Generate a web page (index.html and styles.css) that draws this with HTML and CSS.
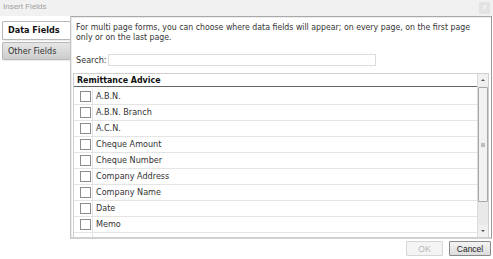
FILE: index.html
```html
<!DOCTYPE html>
<html>
<head>
<meta charset="utf-8">
<link rel="stylesheet" href="styles.css">
</head>
<body>
<div class="dialog">
  <div class="titlebar">
    <span class="title">Insert Fields</span>
    <span class="close">×</span>
  </div>
  <div class="main">
    <div class="tabs">
      <div class="tab active">Data Fields</div>
      <div class="tab">Other Fields</div>
    </div>
    <div class="panel">
      <p class="desc">For multi page forms, you can choose where data fields will appear; on every page, on the first page only or on the last page.</p>
      <div class="search">
        <span class="search-label">Search:</span>
        <span class="search-input"></span>
      </div>
      <div class="list">
        <div class="list-body">
          <div class="list-header">Remittance Advice</div>
          <div class="rows">
            <div class="row"><span class="cb-cell"><span class="cb"></span></span><span class="label">A.B.N.</span></div>
            <div class="row"><span class="cb-cell"><span class="cb"></span></span><span class="label">A.B.N. Branch</span></div>
            <div class="row"><span class="cb-cell"><span class="cb"></span></span><span class="label">A.C.N.</span></div>
            <div class="row"><span class="cb-cell"><span class="cb"></span></span><span class="label">Cheque Amount</span></div>
            <div class="row"><span class="cb-cell"><span class="cb"></span></span><span class="label">Cheque Number</span></div>
            <div class="row"><span class="cb-cell"><span class="cb"></span></span><span class="label">Company Address</span></div>
            <div class="row"><span class="cb-cell"><span class="cb"></span></span><span class="label">Company Name</span></div>
            <div class="row"><span class="cb-cell"><span class="cb"></span></span><span class="label">Date</span></div>
            <div class="row"><span class="cb-cell"><span class="cb"></span></span><span class="label">Memo</span></div>
            <div class="row row-empty"><span class="cb-cell"></span></div>
          </div>
        </div>
        <div class="scrollbar">
          <div class="arrow up"></div>
          <div class="track">
            <div class="thumb"><span class="grip"></span></div>
          </div>
          <div class="arrow down"></div>
        </div>
      </div>
    </div>
  </div>
  <div class="footer">
    <button class="btn disabled">OK</button>
    <button class="btn">Cancel</button>
  </div>
</div>
</body>
</html>
```

FILE: styles.css
```css
html, body {
  margin: 0;
  padding: 0;
  background: #ffffff;
}
body {
  font-family: "DejaVu Sans Condensed", "DejaVu Sans", sans-serif;
  font-stretch: condensed;
  font-size: 9px;
  color: #333;
  width: 493px;
  height: 259px;
  overflow: hidden;
}
.dialog {
  width: 493px;
  height: 259px;
  display: flex;
  flex-direction: column;
}
.titlebar {
  height: 16px;
  background: #f1f1f1;
  display: flex;
  justify-content: space-between;
  align-items: flex-start;
  padding: 0 3px;
  box-sizing: border-box;
}
.title {
  font-family: "Liberation Sans", sans-serif;
  font-size: 8px;
  color: #a0a0a0;
  line-height: 14px;
}
.close {
  margin-top: 2px;
  width: 11px;
  height: 12px;
  background: #e3e3e3;
  color: #f8f8f8;
  font-size: 8px;
  line-height: 12px;
  text-align: center;
}
.main {
  display: flex;
  height: 223px;
}
.tabs {
  width: 68px;
  padding: 5px 0 0 2px;
  display: flex;
  flex-direction: column;
  gap: 2px;
}
.tab {
  height: 16px;
  border: 1px solid #b8b8b8;
  border-right: none;
  border-radius: 2px 0 0 2px;
  padding-left: 5px;
  line-height: 16px;
  background: linear-gradient(#e6e6e6, #cdcdcd);
  color: #333;
  box-shadow: 0 1px 1px rgba(0,0,0,0.08);
}
.tab.active {
  background: #fff;
  font-weight: bold;
  color: #111;
  height: 17px;
  line-height: 17px;
}
.panel {
  flex: 1;
  margin-right: 1px;
  border-top: 1px solid #a9a9a9;
  border-left: 1px solid #c4c4c4;
  border-right: 1px solid #9a9a9a;
  border-bottom: 2px solid #d0d0d0;
  padding: 5px 0 0 1px;
  display: flex;
  flex-direction: column;
  box-shadow: inset 1px 1px 0 #ececec;
}
.desc {
  margin: 0 0 0 4px;
  max-width: 402px;
  font-size: 8.7px;
  line-height: 10px;
  color: #333;
}
.search {
  display: flex;
  align-items: center;
  margin: 12px 0 0 4px;
  height: 11px;
}
.search-label {
  width: 32px;
  flex-shrink: 0;
}
.search-input {
  flex-shrink: 0;
  width: 266px;
  height: 10px;
  border: 1px solid #dcdcdc;
}
.list {
  margin: 8px 2px 0 1px;
  flex: 1;
  border: 1px solid #cfcfcf;
  border-bottom: none;
  display: flex;
  overflow: hidden;
}
.list-body {
  flex: 1;
  overflow: hidden;
}
.list-header {
  height: 12px;
  padding-left: 3px;
  font-weight: bold;
  font-size: 8.8px;
  color: #111;
  line-height: 13px;
  border-bottom: 1px solid #666;
}
.rows {
  padding-top: 2px;
}
.row {
  height: 15px;
  border-bottom: 1px solid #e4e4e4;
  display: flex;
  align-items: stretch;
}
.row-empty {
  border-bottom: none;
}
.cb-cell {
  width: 19px;
  border-right: 1px solid #e4e4e4;
  display: flex;
  align-items: center;
  padding-left: 6px;
  box-sizing: border-box;
}
.cb {
  width: 9px;
  height: 9px;
  border: 1px solid #8c8c8c;
  background: #fff;
}
.label {
  padding-left: 3px;
  line-height: 15px;
  color: #333;
}
.scrollbar {
  width: 10px;
  background: #e9e9e9;
  border-left: 1px solid #dcdcdc;
  display: flex;
  flex-direction: column;
}
.arrow {
  height: 12px;
  position: relative;
  background: #f0f0f0;
}
.arrow.up::after, .arrow.down::after {
  content: "";
  position: absolute;
  left: 3px;
  border-left: 2px solid transparent;
  border-right: 2px solid transparent;
}
.arrow.up::after {
  top: 5px;
  border-bottom: 2px solid #555;
}
.arrow.down::after {
  top: 5px;
  border-top: 2px solid #555;
}
.track {
  flex: 1;
  padding: 1px 0;
}
.thumb {
  height: 113px;
  background: #f2f2f2;
  border: 1px solid #a8a8a8;
  border-radius: 1px;
  display: flex;
  align-items: center;
  justify-content: center;
}
.grip {
  width: 4px;
  height: 4px;
  background: #bdbdbd;
}
.footer {
  display: flex;
  justify-content: flex-end;
  gap: 6px;
  padding: 2px 2px 0 0;
}
.btn {
  height: 15px;
  padding: 0;
  font-family: "Liberation Sans", sans-serif;
  font-size: 8.5px;
  border: 1px solid #8a8a8a;
  background: linear-gradient(#f4f4f4, #dcdcdc);
  color: #222;
  border-radius: 1px;
  width: 42px;
}
.btn.disabled {
  width: 37px;
  border-color: #d6d6d6;
  background: #f4f4f4;
  color: #b4b4b4;
}
```
